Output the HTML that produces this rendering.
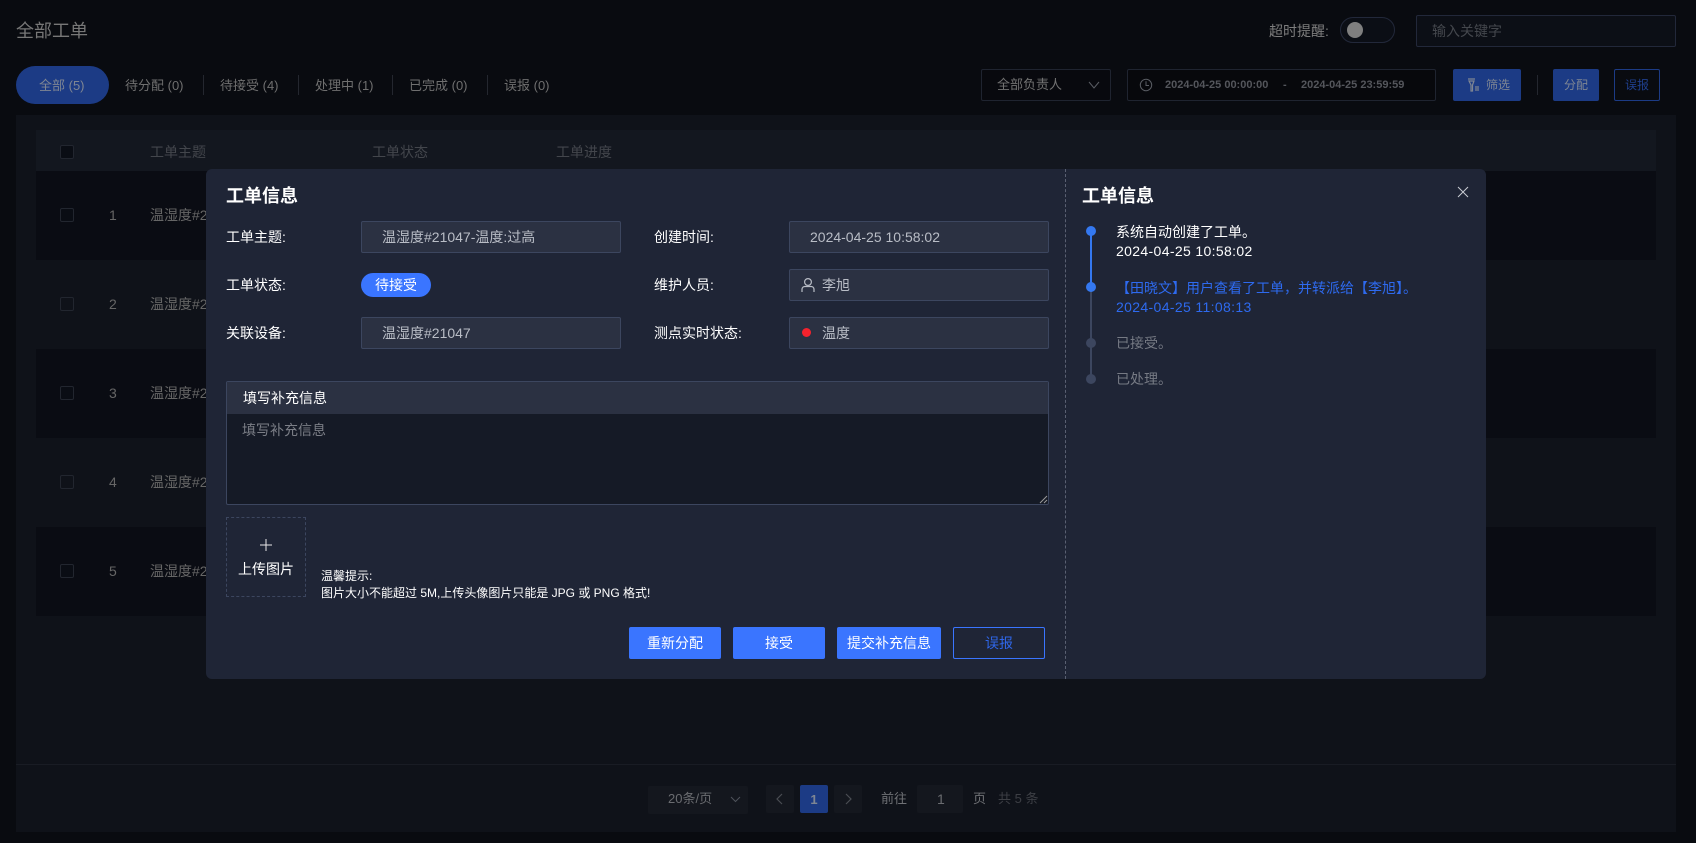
<!DOCTYPE html>
<html lang="zh"><head><meta charset="utf-8"><title>全部工单</title>
<style>
html,body{margin:0;padding:0;background:#090b10;width:1696px;height:843px;overflow:hidden}
body{position:relative;font-family:"Liberation Sans","Noto Sans CJK SC",sans-serif;font-size:14px;color:#777}
div,span,svg{box-sizing:border-box}
.a{position:absolute}
.t{position:absolute;white-space:nowrap;line-height:20px;height:20px}
.sep{position:absolute;width:1px;height:20px;top:75px;background:#24272f}
.cb{position:absolute;left:60px;width:14px;height:14px;border:1px solid #22262f;border-radius:2px;background:#0a0d14}
.row{position:absolute;left:36px;width:1620px;height:89px}
.lab{color:#fff;left:226px}
.lab2{color:#fff;left:654px}
.inp{position:absolute;width:260px;height:32px;background:#2b3142;border:1px solid #3c465f;border-radius:2px}
.val{color:#b9bdc6}
.btn{position:absolute;top:627px;height:32px;background:#3a75ff;border-radius:2px;color:#fff;text-align:center;line-height:32px}
.dot{position:absolute;left:1086px;width:10px;height:10px;border-radius:50%}
.pg{position:absolute;width:28px;height:28px;top:785px;background:#14171e;border-radius:2px}
.c{font-size:13px}
</style></head><body>
<div class="t" style="left:16px;top:20px;height:22px;line-height:22px;font-size:18px;color:#777">全部工单</div>
<div class="t" style="left:1269px;top:21px;color:#7d7d7d">超时提醒:</div>
<div class="a" style="left:1340px;top:17px;width:55px;height:26px;border:1px solid #22283a;border-radius:13px;background:#0b0e15"></div>
<div class="a" style="left:1347px;top:22px;width:16px;height:16px;border-radius:50%;background:#7f7f7f"></div>
<div class="a" style="left:1416px;top:15px;width:260px;height:32px;border:1px solid #22283a;border-radius:2px;background:#0c0f16"></div>
<div class="t" style="left:1432px;top:21px;color:#44474d">输入关键字</div>

<div class="a" style="left:16px;top:66px;width:93px;height:38px;border-radius:19px;background:#1c3b85"></div>
<div class="t" style="left:39px;top:76px;font-size:13px;color:#7f8693">全部 <span class="c">(5)</span></div>
<div class="t" style="left:125px;top:76px;font-size:13px;color:#6f6f6f">待分配 <span class="c">(0)</span></div>
<div class="sep" style="left:203px"></div>
<div class="t" style="left:220px;top:76px;font-size:13px;color:#6f6f6f">待接受 <span class="c">(4)</span></div>
<div class="sep" style="left:298px"></div>
<div class="t" style="left:315px;top:76px;font-size:13px;color:#6f6f6f">处理中 <span class="c">(1)</span></div>
<div class="sep" style="left:392px"></div>
<div class="t" style="left:409px;top:76px;font-size:13px;color:#6f6f6f">已完成 <span class="c">(0)</span></div>
<div class="sep" style="left:487px"></div>
<div class="t" style="left:504px;top:76px;font-size:13px;color:#6f6f6f">误报 <span class="c">(0)</span></div>

<div class="a" style="left:981px;top:69px;width:130px;height:32px;background:#08090e;border:1px solid #1f2430;border-radius:2px"></div>
<div class="t" style="left:997px;top:75px;font-size:13px;color:#727272">全部负责人</div>
<svg class="a" style="left:1088px;top:80px" width="12" height="10" viewBox="0 0 12 10"><path d="M1 2l5 6 5-6" fill="none" stroke="#5a5d64" stroke-width="1"/></svg>
<div class="a" style="left:1127px;top:69px;width:309px;height:32px;background:#07080c;border:1px solid #1f2430;border-radius:2px"></div>
<svg class="a" style="left:1139px;top:78px" width="14" height="14" viewBox="0 0 14 14"><circle cx="7" cy="7" r="5.7" fill="none" stroke="#5a5d64"/><path d="M7 3.2V7.5H10" fill="none" stroke="#5a5d64"/></svg>
<div class="t" style="left:1165px;top:75px;font-size:11px;font-weight:bold;color:#54565c">2024-04-25 00:00:00</div>
<div class="t" style="left:1283px;top:75px;font-size:11px;font-weight:bold;color:#54565c">-</div>
<div class="t" style="left:1301px;top:75px;font-size:11px;font-weight:bold;color:#54565c">2024-04-25 23:59:59</div>
<div class="a" style="left:1453px;top:69px;width:68px;height:32px;background:#1c3b85;border-radius:2px"></div>
<svg class="a" style="left:1467px;top:78px" width="12" height="14" viewBox="0 0 12 14"><path d="M1 1h7M2 3h5L5.500 7v6H4V7z M9 8v5M11 8v5" fill="none" stroke="#7f8693" stroke-width="1.200"/></svg>
<div class="t" style="left:1486px;top:75px;font-size:12px;color:#7f8693">筛选</div>
<div class="sep" style="left:1537px"></div>
<div class="a" style="left:1553px;top:69px;width:46px;height:32px;background:#1c3b85;border-radius:2px"></div>
<div class="t" style="left:1564px;top:75px;font-size:12px;color:#7f8693">分配</div>
<div class="a" style="left:1614px;top:69px;width:46px;height:32px;border:1px solid #1c3b85;border-radius:2px"></div>
<div class="t" style="left:1625px;top:75px;font-size:12px;color:#1f3f8d">误报</div>

<div class="a" style="left:16px;top:115px;width:1660px;height:717px;background:#0f1219"></div>
<div class="a" style="left:36px;top:130px;width:1620px;height:41px;background:#13171f"></div>
<div class="cb" style="top:145px"></div>
<div class="t" style="left:150px;top:142px;color:#43464c">工单主题</div>
<div class="t" style="left:372px;top:142px;color:#43464c">工单状态</div>
<div class="t" style="left:556px;top:142px;color:#43464c">工单进度</div>

<div class="row" style="top:171px;background:#0a0c13"></div>
<div class="row" style="top:349px;background:#0a0c13"></div>
<div class="row" style="top:527px;background:#0a0c13"></div>
<div class="cb" style="top:208px"></div><div class="t" style="left:109px;top:205px;color:#666">1</div><div class="t" style="left:150px;top:205px;color:#666">温湿度#21047-温度:过高</div>
<div class="cb" style="top:297px;background:none"></div><div class="t" style="left:109px;top:294px;color:#666">2</div><div class="t" style="left:150px;top:294px;color:#666">温湿度#21047-温度:过高</div>
<div class="cb" style="top:386px"></div><div class="t" style="left:109px;top:383px;color:#666">3</div><div class="t" style="left:150px;top:383px;color:#666">温湿度#21047-温度:过高</div>
<div class="cb" style="top:475px;background:none"></div><div class="t" style="left:109px;top:472px;color:#666">4</div><div class="t" style="left:150px;top:472px;color:#666">温湿度#21047-温度:过高</div>
<div class="cb" style="top:564px"></div><div class="t" style="left:109px;top:561px;color:#666">5</div><div class="t" style="left:150px;top:561px;color:#666">温湿度#21047-温度:过高</div>

<div class="a" style="left:16px;top:764px;width:1660px;height:1px;background:#191c24"></div>
<div class="a" style="left:648px;top:786px;width:100px;height:28px;background:#14171e;border-radius:2px"></div>
<div class="t" style="left:668px;top:789px;font-size:13px;color:#6a6c70">20条/页</div>
<svg class="a" style="left:730px;top:795px" width="11" height="9" viewBox="0 0 11 9"><path d="M1 2l4.500 4.500L10 2" fill="none" stroke="#4f535b"/></svg>
<div class="pg" style="left:766px"></div>
<svg class="a" style="left:775px;top:793px" width="10" height="12" viewBox="0 0 10 12"><path d="M7 1L2 6l5 5" fill="none" stroke="#4a4d53" stroke-width="1.200"/></svg>
<div class="pg" style="left:800px;background:#1c3b85;color:#7f8693;font-weight:bold;font-size:13px;text-align:center;line-height:30px">1</div>
<div class="pg" style="left:834px"></div>
<svg class="a" style="left:843px;top:793px" width="10" height="12" viewBox="0 0 10 12"><path d="M3 1l5 5-5 5" fill="none" stroke="#4a4d53" stroke-width="1.200"/></svg>
<div class="t" style="left:881px;top:789px;font-size:13px;color:#6f7175">前往</div>
<div class="a" style="left:917px;top:785px;width:46px;height:28px;background:#14171e;border-radius:2px"></div>
<div class="t" style="left:937px;top:789px;color:#6a6c70">1</div>
<div class="t" style="left:973px;top:789px;font-size:13px;color:#6f7175">页</div>
<div class="t" style="left:998px;top:789px;font-size:13px;color:#3d3f45">共 5 条</div>

<!-- modal -->
<div class="a" style="left:206px;top:169px;width:1280px;height:510px;background:#1f2536;border-radius:6px"></div>
<div class="a" style="left:1065px;top:169px;width:0;height:510px;border-left:1px dashed #5a6072"></div>

<div class="t" style="left:226px;top:184px;height:24px;line-height:24px;font-size:18px;font-weight:bold;color:#fff">工单信息</div>
<div class="t lab" style="top:227px">工单主题:</div>
<div class="t lab" style="top:275px">工单状态:</div>
<div class="t lab" style="top:323px">关联设备:</div>
<div class="inp" style="left:361px;top:221px"></div>
<div class="t val" style="left:382px;top:227px">温湿度#21047-温度:过高</div>
<div class="a" style="left:361px;top:273px;width:70px;height:24px;background:#3a75ff;border-radius:12px;color:#fff;text-align:center;line-height:24px">待接受</div>
<div class="inp" style="left:361px;top:317px"></div>
<div class="t val" style="left:382px;top:323px">温湿度#21047</div>

<div class="t lab2" style="top:227px">创建时间:</div>
<div class="t lab2" style="top:275px">维护人员:</div>
<div class="t lab2" style="top:323px">测点实时状态:</div>
<div class="inp" style="left:789px;top:221px"></div>
<div class="t val" style="left:810px;top:227px">2024-04-25 10:58:02</div>
<div class="inp" style="left:789px;top:269px"></div>
<svg class="a" style="left:800px;top:277px" width="16" height="16" viewBox="0 0 16 16"><circle cx="8" cy="5" r="3.400" fill="none" stroke="#b9bdc6" stroke-width="1.200"/><path d="M2 15v-2.500c0-2 1.500-3 3-3h6c1.500 0 3 1 3 3V15" fill="none" stroke="#b9bdc6" stroke-width="1.200"/></svg>
<div class="t val" style="left:822px;top:275px">李旭</div>
<div class="inp" style="left:789px;top:317px"></div>
<div class="a" style="left:802px;top:328px;width:9px;height:9px;border-radius:50%;background:#f5222d"></div>
<div class="t val" style="left:822px;top:323px">温度</div>

<div class="a" style="left:226px;top:381px;width:823px;height:124px;border:1px solid #3c465f;border-radius:2px;background:#151a26"></div>
<div class="a" style="left:227px;top:382px;width:821px;height:32px;background:#2b3142"></div>
<div class="t" style="left:243px;top:388px;color:#fff">填写补充信息</div>
<div class="t" style="left:242px;top:420px;color:#7b7e86">填写补充信息</div>
<svg class="a" style="left:1039px;top:495px" width="9" height="9" viewBox="0 0 9 9"><path d="M1 8L8 1M5 8L8 5" stroke="#9a9a9a" stroke-width="1"/></svg>

<div class="a" style="left:226px;top:517px;width:80px;height:80px;border:1px dashed #3c465f"></div>
<svg class="a" style="left:260px;top:539px" width="12" height="12" viewBox="0 0 12 12"><path d="M6 0v12M0 6h12" stroke="#e8e8e8" stroke-width="1"/></svg>
<div class="t" style="left:238px;top:559px;color:#fff">上传图片</div>
<div class="t" style="left:321px;top:566px;font-size:12px;color:#fff">温馨提示:</div>
<div class="t" style="left:321px;top:583px;font-size:12px;color:#fff">图片大小不能超过 5M,上传头像图片只能是 JPG 或 PNG 格式!</div>

<div class="btn" style="left:629px;width:92px">重新分配</div>
<div class="btn" style="left:733px;width:92px">接受</div>
<div class="btn" style="left:837px;width:104px">提交补充信息</div>
<div class="btn" style="left:953px;width:92px;background:none;border:1px solid #3a75ff;color:#2f66e8;line-height:30px">误报</div>

<div class="t" style="left:1082px;top:184px;height:24px;line-height:24px;font-size:18px;font-weight:bold;color:#fff">工单信息</div>
<svg class="a" style="left:1457px;top:186px" width="12" height="12" viewBox="0 0 12 12"><path d="M1 1l10 10M11 1L1 11" stroke="#c9ccd3" stroke-width="1"/></svg>
<div class="a" style="left:1090px;top:231px;width:2px;height:56px;background:#3478f0"></div>
<div class="a" style="left:1090px;top:287px;width:2px;height:92px;background:#3c465f"></div>
<div class="dot" style="top:226px;background:#3478f0"></div>
<div class="dot" style="top:282px;background:#3478f0"></div>
<div class="dot" style="top:338px;background:#3c465f"></div>
<div class="dot" style="top:374px;background:#3c465f"></div>
<div class="t" style="left:1116px;top:222px;color:#fff">系统自动创建了工单。</div>
<div class="t" style="left:1116px;top:241px;color:#fff;letter-spacing:.35px">2024-04-25 10:58:02</div>
<div class="t" style="left:1116px;top:278px;color:#2e6aef;font-feature-settings:'palt' 0;font-kerning:none">【田晓文】用户查看了工单，并转派给【李旭】。</div>
<div class="t" style="left:1116px;top:297px;color:#2e6aef;letter-spacing:.35px">2024-04-25 11:08:13</div>
<div class="t" style="left:1116px;top:333px;color:#767a84">已接受。</div>
<div class="t" style="left:1116px;top:369px;color:#767a84">已处理。</div>
</body></html>
